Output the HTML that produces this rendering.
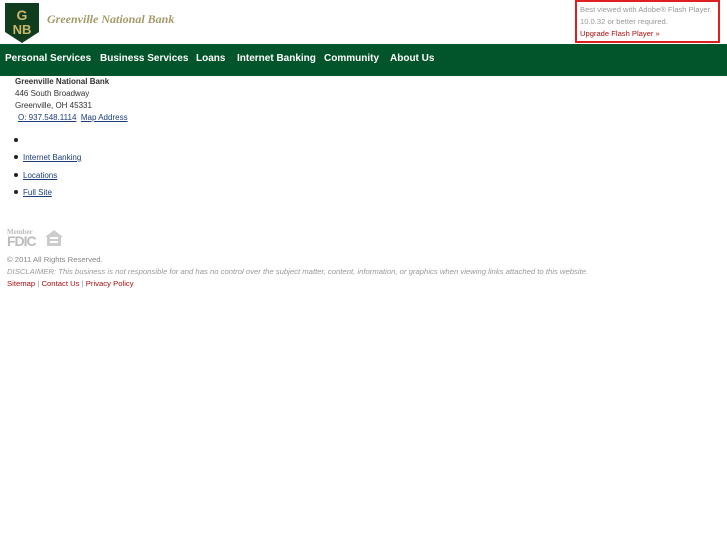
<!DOCTYPE html>
<html><head><style>
body{margin:0;width:727px;height:545px;background:#fff;font-family:"Liberation Sans",sans-serif;position:relative;overflow:hidden}
.a{position:absolute;white-space:nowrap}
.nav{position:absolute;left:0;top:44px;width:727px;height:32px;background:#02542b}
.nav span{position:absolute;top:8px;color:#fff;font-weight:bold;font-size:10px}
.s{font-size:8px;color:#333}
a{color:#1c3d7a;text-decoration:underline}
.li{font-size:8px}
.dot{position:absolute;width:4px;height:4px;border-radius:2px;background:#222}
</style></head><body>
<svg class="a" style="left:2px;top:2px" width="40" height="42" viewBox="0 0 40 42">
<path d="M3 1H37V30L20 41L3 30Z" fill="#0f3d1e"/>
<text x="20" y="18" font-family="Liberation Sans" font-weight="bold" font-size="14" fill="#c9b76a" text-anchor="middle">G</text>
<text x="20" y="32" font-family="Liberation Sans" font-weight="bold" font-size="13" fill="#c9b76a" text-anchor="middle">NB</text>
</svg>
<div class="a" style="left:47px;top:12px;font-family:'Liberation Serif',serif;font-style:italic;font-weight:bold;font-size:12px;color:#a49a6a">Greenville National Bank</div>
<div class="a" style="left:575px;top:0;width:141px;height:39px;border:2px solid #e02020"></div>
<div class="a" style="left:580px;top:4px;font-size:7.6px;color:#999;line-height:12px">Best viewed with Adobe® Flash Player.<br>10.0.32 or better required.<br><span style="color:#b01010">Upgrade Flash Player »</span></div>
<div class="nav">
<span style="left:5px;top:9px">Personal Services</span>
<span style="left:100px;top:9px">Business Services</span>
<span style="left:196px;top:9px">Loans</span>
<span style="left:237px;top:9px">Internet Banking</span>
<span style="left:324px;top:9px">Community</span>
<span style="left:390px;top:9px">About Us</span>
</div>
<div class="a s" style="left:15px;top:77px;font-weight:bold">Greenville National Bank</div>
<div class="a s" style="left:15px;top:89px">446 South Broadway</div>
<div class="a s" style="left:15px;top:101px">Greenville, OH 45331</div>
<div class="a li" style="left:18px;top:113px"><a>O: 937.548.1114</a>&nbsp;&nbsp;<a>Map Address</a></div>
<div class="dot" style="left:14px;top:138px"></div>
<div class="dot" style="left:14px;top:155px"></div><div class="a li" style="left:23px;top:153px"><a>Internet Banking</a></div>
<div class="dot" style="left:14px;top:173px"></div><div class="a li" style="left:23px;top:171px"><a>Locations</a></div>
<div class="dot" style="left:14px;top:190px"></div><div class="a li" style="left:23px;top:188px"><a>Full Site</a></div>
<div class="a" style="left:7px;top:228px;font-family:'Liberation Serif',serif;font-size:7px;color:#bbb;font-weight:bold">Member</div>
<div class="a" style="left:7px;top:233px;font-size:14px;color:#bbb;font-weight:bold;letter-spacing:-1px">FDIC</div>
<svg class="a" style="left:44px;top:229px" width="20" height="18"><path d="M10 1L1 8H3V17H17V8H19Z" fill="#ccc"/><rect x="6" y="8" width="8" height="2" fill="#fff"/><rect x="6" y="12" width="8" height="2" fill="#fff"/></svg>
<div class="a" style="left:7px;top:255px;font-size:7.7px;color:#888">© 2011 All Rights Reserved.</div>
<div class="a" style="left:7px;top:267px;font-size:7.7px;color:#999;font-style:italic">DISCLAIMER: This business is not responsible for and has no control over the subject matter, content, information, or graphics when viewing links attached to this website.</div>
<div class="a" style="left:7px;top:279px;font-size:7.7px;color:#aa1111">Sitemap <span style="color:#999">|</span> Contact Us <span style="color:#999">|</span> Privacy Policy</div>
</body></html>
